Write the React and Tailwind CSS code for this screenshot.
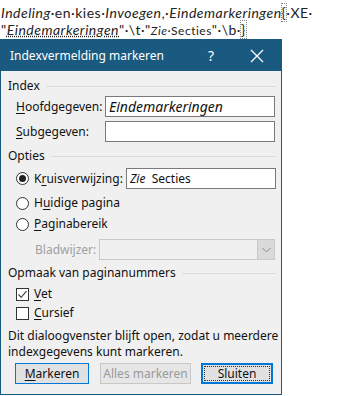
import React from "react";

const FONT = { fontFamily: '"Noto Sans", "Open Sans", sans-serif' };
const DOC_FONT = { fontFamily: 'Lato, "Noto Sans", sans-serif' };

const Group = ({ title }) => (
  <div className="flex items-center h-[18px] pl-[7px] pr-[5px]">
    <span>{title}</span>
    <div className="flex-1 ml-[6px] border-t border-[#dcdcdc]" />
  </div>
);

const U = ({ children }) => <span className="underline underline-offset-2">{children}</span>;

const Radio = ({ checked }) => (
  <span className="w-[13px] h-[13px] rounded-full border border-[#333] bg-white flex items-center justify-center shrink-0">
    {checked && <span className="w-[7px] h-[7px] rounded-full bg-[#222]" />}
  </span>
);

const Check = ({ checked }) => (
  <span className="w-[13px] h-[13px] border border-[#333] bg-white flex items-center justify-center shrink-0">
    {checked && (
      <svg width="11" height="11" viewBox="0 0 11 11">
        <path d="M1.5 5.5 L4.2 8.3 L9.5 2.2" fill="none" stroke="#333" strokeWidth="1.1" />
      </svg>
    )}
  </span>
);

const Field = ({ className, children }) => (
  <div className={"h-[21px] bg-white border border-[#7a7a7a] flex items-center px-[3px] " + className}>
    {children}
  </div>
);

export default function App() {
  return (
    <div className="w-[348px] h-[396px] bg-white overflow-hidden relative" style={FONT}>
      <div className="text-[14px] leading-[17px] tracking-[0.5px] text-[#222] pt-[4px] pl-[1px] whitespace-nowrap" style={DOC_FONT}>
        <div>
          <i>Indeling</i>·en·kies·<i>Invoegen</i>,·<i>Eindemarkeringen</i>
          <span className="outline outline-1 outline-dotted outline-[#888]">{"{"}</span>·XE·
        </div>
        <div>
          "<i className="underline decoration-dotted">Eindemarkeringen</i>"·\t·"<span className="text-[12px]"><i>Zie</i>·Secties</span>"·\b·
          <span className="outline outline-1 outline-dotted outline-[#888]">{"}"}</span>
        </div>
      </div>

      <div className="w-[282px] h-[356px] border border-[#1b5a80] bg-[#f0f0f0] text-[12px] text-[#111] flex flex-col">
        <div className="h-[31px] bg-[#1b5a80] text-white flex items-center pl-[9px] shrink-0">
          <span className="text-[12px] flex-1">Indexvermelding markeren</span>
          <span className="text-[14px] w-[40px] text-center">?</span>
          <svg width="14" height="14" viewBox="0 0 14 14" className="ml-[19px] mr-[17px]">
            <path d="M1 1 L13 13 M13 1 L1 13" stroke="white" strokeWidth="1.3" />
          </svg>
        </div>

        <div className="flex flex-col pt-[6px]">
          <Group title="Index" />
          <div className="flex items-center mt-[1px] pl-[15px] pr-[5px]">
            <span className="w-[89px]"><U>H</U>oofdgegeven:</span>
            <Field className="w-[170px] italic text-[14px]">Eindemarkeringen</Field>
          </div>
          <div className="flex items-center mt-[4px] pl-[15px]">
            <span className="w-[89px]"><U>S</U>ubgegeven:</span>
            <Field className="w-[170px]" />
          </div>

          <div className="mt-[5px]"><Group title="Opties" /></div>
          <div className="flex items-center mt-[3px] pl-[15px]">
            <Radio checked />
            <span className="ml-[5px] w-[92px]">K<U>r</U>uisverwijzing:</span>
            <Field className="w-[150px]"><i>Zie</i>&nbsp;&nbsp;Secties</Field>
          </div>
          <div className="flex items-center mt-[6px] pl-[15px] h-[16px]">
            <Radio />
            <span className="ml-[5px]">H<U>u</U>idige pagina</span>
          </div>
          <div className="flex items-center mt-[5px] pl-[15px] h-[16px]">
            <Radio />
            <span className="ml-[5px]"><U>P</U>aginabereik</span>
          </div>
          <div className="flex items-center mt-[7px] pl-[34px]">
            <span className="w-[64px] text-[#a0a0a0]">Bladwijzer:</span>
            <div className="w-[176px] h-[21px] border border-[#c8c8c8] bg-[#f0f0f0] flex justify-end">
              <div className="w-[17px] h-full bg-[#dadada] border-l border-[#c8c8c8] flex items-center justify-center">
                <svg width="9" height="6" viewBox="0 0 9 6">
                  <path d="M0.5 1 L4.5 5 L8.5 1" fill="none" stroke="#888" strokeWidth="1" />
                </svg>
              </div>
            </div>
          </div>

          <div className="mt-[4px]"><Group title="Opmaak van paginanummers" /></div>
          <div className="flex items-center mt-[4px] pl-[15px] h-[16px]">
            <Check checked />
            <span className="ml-[5px]"><U>V</U>et</span>
          </div>
          <div className="flex items-center mt-[3px] pl-[15px] h-[16px]">
            <Check />
            <span className="ml-[5px]"><U>C</U>ursief</span>
          </div>

          <div className="mt-[7px] pl-[7px] leading-[16px]">
            Dit dialoogvenster blijft open, zodat u meerdere<br />indexgegevens kunt markeren.
          </div>

          <div className="flex mt-[3px] pl-[14px]">
            <button className="w-[74px] h-[21px] border border-[#0078d7] bg-[#e1e1e1]"><U>M</U>arkeren</button>
            <button className="ml-[11px] w-[91px] h-[21px] border border-[#c8c8c8] bg-[#e6e6e6] text-[#9a9a9a]">Alles markeren</button>
            <button className="ml-[10px] w-[72px] h-[21px] border-2 border-[#0078d7] bg-[#e1e1e1] p-[1px]">
              <span className="w-full h-full flex items-center justify-center outline outline-1 outline-dotted outline-[#333] -outline-offset-1">Sluiten</span>
            </button>
          </div>
        </div>
      </div>
    </div>
  );
}
